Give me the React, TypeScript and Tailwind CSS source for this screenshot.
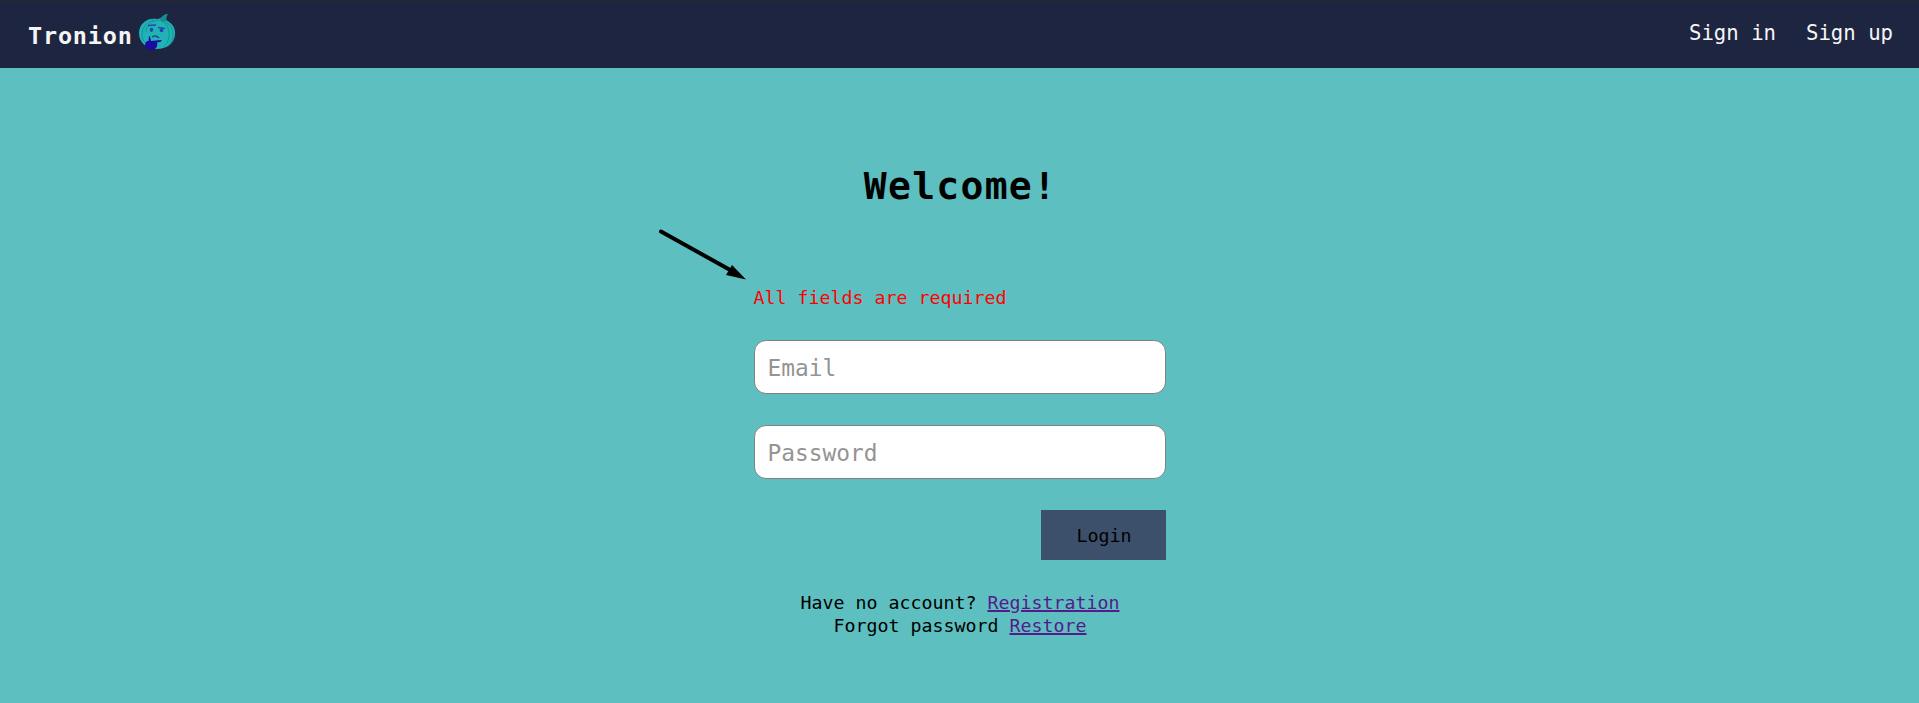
import React from "react";

function Logo() {
  return (
    <svg className="mt-[13px] ml-[6px] h-[37px] w-[37px]" viewBox="0 0 37 37">
      <path d="M18 5C21 5 23 3 25 1L29 0C27 2 27 4 27 6C33 9 37 14 36 21C35 30 27 35 18 35C8 35 0 29 0 19C0 10 8 3 18 5Z" fill="#20b2b4" />
      <path d="M20 5C23 4 24 1 28.500 0C27 2 27 4 28 7L23 8Z" fill="#128f94" />
      <g fill="none" stroke="#158f9b" strokeWidth="0.900">
        <path d="M15 6C7 8 3 14 3 20C3 26 6 30 10 32" />
        <path d="M20 6C12 7 7 12 7 18" />
        <path d="M23 7C31 11 33 25 25 33" />
        <path d="M27 8C36 14 36 25 30 31" />
      </g>
      <path d="M9 11.500L17 11M19 13.500L26 14.500" fill="none" stroke="#264aa5" strokeWidth="1.300" />
      <ellipse cx="12.500" cy="15.800" rx="1.700" ry="2.100" fill="#253fae" />
      <ellipse cx="22.500" cy="16.300" rx="1.700" ry="1.900" fill="#253fae" />
      <path d="M13 23C16 21 18 22 20 24" fill="none" stroke="#204b86" strokeWidth="1.300" />
      <path d="M10 22C11 22 11.500 24 12 27L22 26C23.500 27 22 28 18 28.500C19 32 17 36 12 36C8 36 5 33 6.500 29C7 27 9 27 9.500 27Z" fill="#1b0ba0" />
    </svg>
  );
}

function Field({ type, label }: { type: string; label: string }) {
  return (
    <input
      type={type}
      placeholder={label}
      className="block h-[54px] w-full rounded-[12px] border border-[#808080] bg-white px-[13px] pt-[2px] text-[22.840px] text-black outline-none placeholder:text-[#949494]"
    />
  );
}

export default function App() {
  return (
    <div className="h-[703px] overflow-hidden bg-[#5dbfbf] font-['DejaVu_Sans_Mono',monospace] text-[18.270px] text-black">
      <header className="flex h-[68px] items-start justify-between border-t border-[#292929] bg-[#1d2540] pr-[26px] pl-[28px] text-[#f5f5f5]">
        <a className="flex items-start">
          <span className="mt-[19px] text-[23.500px] leading-[32px] font-bold tracking-[0.800px]">Tronion</span>
          <Logo />
        </a>
        <nav className="mt-[17px] flex gap-[30px] text-[20.650px] leading-[30px]">
          <a>Sign in</a>
          <a>Sign up</a>
        </nav>
      </header>
      <main className="relative mx-auto w-[412px] pt-[92px]">
        <h1 className="pl-[2px] text-center text-[38px] leading-[52px] font-bold tracking-[1.300px]">Welcome!</h1>
        <svg className="absolute top-[157px] -left-[98px] h-[60px] w-[96px]" viewBox="0 0 96 60">
          <path d="M5 6.500L76 46" stroke="black" strokeWidth="4" strokeLinecap="round" />
          <path d="M76 40L90 54.500L70 50Z" fill="black" />
        </svg>
        <p className="mt-[74px] leading-[24px] text-[#ff0000]">All fields are required</p>
        <form className="mt-[30px] flex flex-col gap-[31px]">
          <Field type="email" label="Email" />
          <Field type="password" label="Password" />
          <button type="button" className="h-[50px] w-[125px] self-end bg-[#3d506b] pt-[2px] pl-[2px]">
            Login
          </button>
        </form>
        <div className="mt-[31px] pl-px text-center leading-[23px]">
          <p>
            Have no account? <a className="text-[#551a8b] underline decoration-2">Registration</a>
          </p>
          <p>
            Forgot password <a className="text-[#551a8b] underline decoration-2">Restore</a>
          </p>
        </div>
      </main>
    </div>
  );
}
